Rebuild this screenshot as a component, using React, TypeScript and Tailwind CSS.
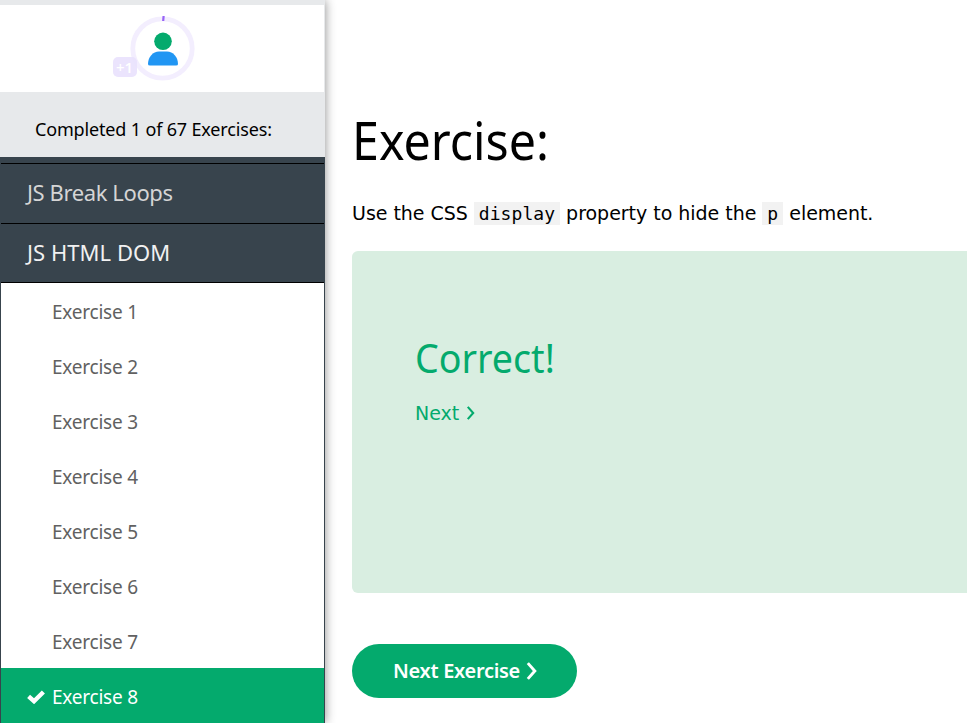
import type { ReactNode } from "react";

const exercises = [1, 2, 3, 4, 5, 6, 7];

function Code({ children }: { children: ReactNode }) {
  return (
    <code className="bg-[#f2f2f2] px-[5px] font-['DejaVu_Sans_Mono',monospace] text-[18px] leading-[23px] tracking-[0.06px] inline-block h-[23px]">
      {children}
    </code>
  );
}

function Chevron({ className, width }: { className: string; width: number }) {
  return (
    <svg viewBox="0 0 10 16" className={className} fill="none" stroke="currentColor" strokeWidth={width}>
      <path d="M1.3 1 L7.5 8 L1.3 15" />
    </svg>
  );
}

function Avatar() {
  return (
    <svg className="ml-[110px] h-[87px] w-[90px]" viewBox="110 5 90 87">
      <circle cx="162.5" cy="48.5" r="29.7" fill="none" stroke="#f3eefe" strokeWidth="4.8" />
      <path d="M163.2 21 L163.6 16" stroke="#9763f6" strokeWidth="2.2" />
      <rect x="113" y="57" width="24" height="20" rx="5" fill="#e9e1fd" fillOpacity="0.9" />
      <text x="116" y="72.5" fontSize="15" fontWeight="600" fill="#fff" fontFamily="Open Sans, sans-serif" textLength="17">
        +1
      </text>
      <ellipse cx="163" cy="41.3" rx="8.8" ry="8.7" fill="#04aa6d" />
      <path d="M148 64 C148 57 153 51.5 159 51.5 H167 C173 51.5 178 57 178 64 Q178 65.5 176 65.5 H150 Q148 65.5 148 64Z" fill="#2196f3" />
    </svg>
  );
}

export default function App() {
  return (
    <div className="flex h-[723px] w-[967px] overflow-hidden bg-white font-['Noto_Sans',sans-serif] text-black">
      <aside className="relative flex w-[325px] shrink-0 flex-col bg-[#e7e9eb] shadow-[0_0_10px_rgba(0,0,0,0.45)]">
        <div className="mt-[5px] mr-px h-[87px] bg-white">
          <Avatar />
        </div>
        <div className="flex h-[65px] items-center pt-[9px] pl-[35px]">
          <span className="text-[18px] leading-6 tracking-[-0.16px] whitespace-nowrap">Completed 1 of 67 Exercises:</span>
        </div>
        <nav className="flex h-[566px] flex-col border-x border-[#38444d] bg-white">
          <div className="h-[6px] shrink-0 bg-[#38444d]" />
          <div className="flex h-[60px] shrink-0 items-center border-t border-black bg-[#38444d] pb-[2px] pl-[26px] text-[22px] tracking-[-0.4px] text-[#d5d5d5]">
            <span>JS Break Loops</span>
          </div>
          <div className="flex h-[60px] shrink-0 items-center border-y border-black bg-[#38444d] pb-[2px] pl-[26px] text-[22px] tracking-[0.05px] text-[#f1f1f1]">
            <span>JS HTML DOM</span>
          </div>
          <ul>
            {exercises.map((n) => (
              <li key={n} className="flex h-[55px] items-center pt-[3px] pl-[51px] text-[19px] tracking-[-0.22px] text-[#616161]">
                <span>Exercise {n}</span>
              </li>
            ))}
            <li className="flex h-[55px] items-center bg-[#04aa6d] pt-[3px] pl-[26px] text-[19px] tracking-[-0.22px] text-white">
              <svg viewBox="0 0 18 14" className="mr-[7px] h-[14px] w-[18px]" fill="none" stroke="currentColor" strokeWidth="4.4">
                <path d="M1.6 6.4 L7 11.2 L16.4 2" />
              </svg>
              <span>Exercise 8</span>
            </li>
          </ul>
        </nav>
      </aside>
      <main className="flex min-w-0 flex-1 flex-col pl-[27px]">
        <h1 className="mt-[104px] h-[72px] origin-left scale-x-[0.93] text-[52px] leading-[72px] whitespace-nowrap">Exercise:</h1>
        <p className="mt-[22px] h-[30px] font-['DejaVu_Sans',Verdana,sans-serif] text-[19px] leading-[30px] tracking-[-0.03px] whitespace-nowrap">
          Use the CSS <Code>display</Code> property to hide the <Code>p</Code> element.
        </p>
        <section className="mt-[23px] h-[342px] rounded-l-[6px] bg-[#d9eee1] pl-[63px] text-[#04aa6d]">
          <h2 className="mt-[79px] h-[56px] origin-left scale-x-[0.94] text-[40px] leading-[56px]">Correct!</h2>
          <div className="mt-[12px] flex h-[30px] items-center font-['DejaVu_Sans',Verdana,sans-serif] text-[19px]">
            <span>Next</span>
            <Chevron className="ml-[7px] h-[14px] w-[10px]" width={2.4} />
          </div>
        </section>
        <button className="mt-[51px] flex h-[54px] w-[225px] items-center rounded-full bg-[#04aa6d] pl-[41px] text-[20px] font-semibold text-white">
          <span className="tracking-[-0.3px] whitespace-nowrap">Next Exercise</span>
          <Chevron className="ml-[6px] h-[18px] w-[12px]" width={2.6} />
        </button>
      </main>
    </div>
  );
}
